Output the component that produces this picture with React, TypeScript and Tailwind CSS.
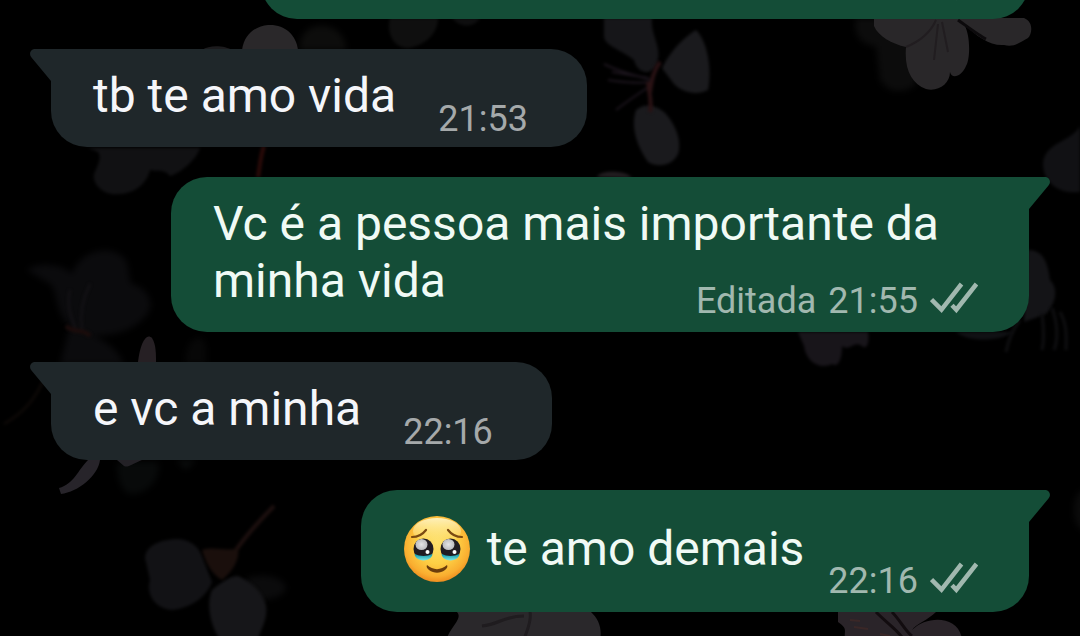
type Message = {
  id: number;
  text: string;
  time: string;
  outgoing?: boolean;
  edited?: boolean;
  emoji?: boolean;
};

const messages: Message[] = [
  { id: 2, text: "tb te amo vida", time: "21:53" },
  {
    id: 3,
    text: "Vc é a pessoa mais importante da minha vida",
    time: "21:55",
    outgoing: true,
    edited: true,
  },
  { id: 4, text: "e vc a minha", time: "22:16" },
  { id: 5, text: "te amo demais", time: "22:16", outgoing: true, emoji: true },
];

function Checks() {
  return (
    <svg
      className="mb-1 h-9 w-12 shrink-0"
      viewBox="0 0 48 36"
      fill="none"
      stroke="currentColor"
      strokeWidth="4.5"
      role="img"
      aria-label="Entregue"
    >
      <path d="M1.5 18.500 11.500 28.700 31.500 3" />
      <path d="M22 24.200 26.300 28.700 46.500 3" />
    </svg>
  );
}

function HoldingTears() {
  return (
    <svg
      className="mr-4 size-[68px] shrink-0"
      viewBox="0 0 68 68"
      role="img"
      aria-label="🥹"
    >
      <defs>
        <radialGradient id="face" cx="50%" cy="42%" r="60%">
          <stop offset="0" stopColor="#fee06a" />
          <stop offset="0.5" stopColor="#fdd045" />
          <stop offset="0.82" stopColor="#f9ae30" />
          <stop offset="1" stopColor="#ec861c" />
        </radialGradient>
        <linearGradient id="highlight" x1="0" y1="0" x2="0" y2="1">
          <stop offset="0" stopColor="#fff6c8" stopOpacity="0.9" />
          <stop offset="1" stopColor="#fff0a0" stopOpacity="0" />
        </linearGradient>
        <linearGradient id="tear" x1="0" y1="0" x2="0" y2="1">
          <stop offset="0.2" stopColor="#1fa3b3" />
          <stop offset="1" stopColor="#7fe6e2" />
        </linearGradient>
        <radialGradient id="shine">
          <stop offset="0" stopColor="#e4e4e6" />
          <stop offset="1" stopColor="#bcbcc0" />
        </radialGradient>
      </defs>
      <circle cx="34" cy="34" r="33" fill="url(#face)" />
      <ellipse cx="34" cy="16" rx="24" ry="13" fill="url(#highlight)" />
      <g fill="none" stroke="#7a4a12" strokeWidth="2.200" strokeLinecap="round">
        <path d="M9 22C14.500 22 20 19 23 15" />
        <path d="M59 22C53.500 22 48 19 45 15" />
      </g>
      {[20.5, 47.5].map((cx) => (
        <g key={cx}>
          <ellipse cx={cx} cy="34" rx="10" ry="10.500" fill="#211c22" />
          <path
            d={`M${cx - 9} 39Q${cx} 43 ${cx + 9} 39C${cx + 8} 47.500 ${cx - 8} 47.500 ${cx - 9} 39Z`}
            fill="url(#tear)"
          />
          <ellipse cx={cx - 2} cy="29.500" rx="6" ry="5.500" fill="url(#shine)" />
          <circle cx={cx + 4} cy="37" r="2" fill="#fff" />
        </g>
      ))}
      <path
        d="M24 50C30 55.500 38 55.500 44 50C45 51.500 44 53.500 42 55C37 58.500 31 58.500 26 55C24 53.500 23 51.500 24 50Z"
        fill="#6b3d0c"
      />
    </svg>
  );
}

function Tail({ outgoing }: { outgoing?: boolean }) {
  return (
    <svg
      className={
        outgoing
          ? "absolute top-0 left-full -ml-px h-8 w-[22px] text-[#144d37]"
          : "absolute top-0 right-full -mr-px h-8 w-[22px] -scale-x-100 text-[#1f272a]"
      }
      viewBox="0 0 22 32"
      fill="currentColor"
      aria-hidden="true"
    >
      <path d="M0 0H17C21.500 0 23.500 5 20.500 8.500L1 32H0Z" />
    </svg>
  );
}

function Meta({ time, outgoing, edited }: Partial<Message>) {
  return (
    <div
      className={
        outgoing
          ? "flex shrink-0 items-end gap-3 text-4xl leading-10 text-[#a1b8af]"
          : "flex shrink-0 items-end gap-3 text-4xl leading-10 text-[#a5a9aa]"
      }
    >
      {edited && <span>Editada</span>}
      <time>{time}</time>
      {outgoing && <Checks />}
    </div>
  );
}

function Bubble({ message }: { message: Message }) {
  const { text, time, outgoing, edited, emoji } = message;

  if (outgoing) {
    return (
      <li className="relative max-w-[858px] self-end rounded-[36px] rounded-tr-none bg-[#144d37] pt-[18px] pr-[51px] pb-[11px] pl-[42px] text-[#f0faf5]">
        <Tail outgoing />
        <div className={edited ? "" : "flex items-end gap-6"}>
          <p className={emoji ? "flex items-center pt-1 pb-4 leading-[73px]" : "leading-[57px]"}>
            {emoji && <HoldingTears />}
            {text}
          </p>
          <div className={edited ? "-mt-7 flex justify-end" : ""}>
            <Meta time={time} outgoing edited={edited} />
          </div>
        </div>
      </li>
    );
  }

  return (
    <li className="relative flex max-w-[858px] items-end gap-[42px] self-start rounded-[36px] rounded-tl-none bg-[#1f272a] pt-[18px] pr-[59px] pb-2 pl-[42px] text-[#f5f6fa]">
      <Tail />
      <p className="pb-[15px] leading-[57px]">{text}</p>
      <Meta time={time} />
    </li>
  );
}

// Dim cherry blossoms behind the conversation
function Wallpaper() {
  return (
    <svg
      className="absolute inset-0 size-full"
      viewBox="0 0 1080 636"
      preserveAspectRatio="xMidYMid slice"
      colorInterpolationFilters="sRGB"
      aria-hidden="true"
    >
      <defs>
        <filter id="soft" x="-20%" y="-20%" width="140%" height="140%">
          <feGaussianBlur stdDeviation="1.500" />
        </filter>
        <filter id="far" x="-20%" y="-20%" width="140%" height="140%">
          <feGaussianBlur stdDeviation="3" />
        </filter>
      </defs>

      <g filter="url(#far)">
        <path d="M300 50C298 32 312 24 325 26C340 28 346 40 346 50Z" fill="#0d0d0c" />
        <path d="M856 18C852 34 862 46 876 46L880 80C890 96 908 92 916 84L910 18Z" fill="#0c0c0c" />
        <path d="M27 270C40 260 66 266 72 274C80 250 110 244 124 258C130 264 128 280 132 284C148 288 156 304 146 316C132 332 108 338 90 334C110 342 120 354 124 364H60L70 326C54 312 58 290 50 284Z" fill="#0b0b0d" />
        <path d="M186 364C184 348 192 336 202 338C208 344 206 356 206 364Z" fill="#070707" />
        <path d="M118 462H158C162 480 146 494 132 494C122 494 116 478 118 462Z" fill="#080a0a" />
        <path d="M176 460H196L186 470Z" fill="#0a0c0c" />
        <path d="M244 580C260 572 284 576 286 588C284 598 264 602 254 598Z" fill="#0b0b0c" />
        <ellipse cx="1084" cy="510" rx="10" ry="20" fill="#0b0b0b" />
      </g>

      <g filter="url(#soft)">
        <path d="M88 148H200C196 160 182 172 170 176C164 168 156 172 150 170C146 186 132 194 118 194C106 196 92 186 94 174C98 164 102 158 98 152Z" fill="#111113" />
        <path d="M390 18H438C438 34 424 46 408 48C394 48 386 34 390 18Z" fill="#0f0f0f" />
        <path d="M452 18H480C474 28 460 28 452 18Z" fill="#0e0e0f" />
        <path d="M604 18H652C650 36 664 48 656 66C648 78 636 70 634 60C622 50 604 46 604 36Z" fill="#161619" />
        <path d="M662 68C672 48 686 36 696 30C708 42 712 70 708 90C696 96 682 92 674 84Z" fill="#1a1a1d" />
        <path d="M636 110C646 102 656 106 664 112C676 124 682 142 678 154C672 166 658 168 648 162C638 148 630 128 636 110Z" fill="#1a1a1d" />
        <path d="M597 177C600 170 626 170 632 178Z" fill="#221d20" />
        <path d="M1080 126C1072 142 1044 142 1043 164C1044 186 1062 194 1080 192Z" fill="#111114" />
        <path d="M1028 250C1044 250 1048 264 1050 280C1060 290 1054 306 1046 314L1024 322Z" fill="#141417" />
        <path d="M956 332H1014C998 342 968 342 956 332Z" fill="#101114" />
        <path d="M798 332H868C870 344 866 350 862 346C854 340 850 352 842 346C842 360 838 368 832 364C820 370 806 362 804 346Z" fill="#18151a" />
        <path d="M146 562C142 552 152 542 168 540C184 536 198 544 202 556L212 582C206 598 190 608 172 610C154 608 146 594 150 580Z" fill="#121215" />
        <path d="M212 590C222 582 230 576 238 576C252 582 264 594 266 606C268 620 260 630 258 640H220C210 624 206 604 212 590Z" fill="#161619" />
      </g>

      <g>
        <path d="M242 50C244 34 256 26 268 25C284 24 296 34 298 50Z" fill="#2a282a" />
        <path d="M202 50C210 44 226 46 232 50Z" fill="#1c1b1d" />
        <path d="M874 18H1024C1034 22 1032 34 1028 38C1020 42 1014 48 1004 45C990 46 976 36 964 24C971 36 970 60 966 66C962 76 952 80 950 72C950 84 938 92 926 89C912 84 904 70 906 47C892 44 878 36 874 26Z" fill="#292729" />
        <path d="M906 47C918 42 930 34 936 20M934 60 938 24M948 52 942 22" fill="none" stroke="#211d20" strokeWidth="2" />
        <path d="M958 20C972 30 980 36 986 39" fill="none" stroke="#0c0a0c" strokeWidth="3" />
        <path d="M138 362C140 344 146 332 152 338C156 344 156 354 156 362Z" fill="#262024" />
        <path d="M88 460H100C98 476 78 492 61 494L59 488C74 484 78 470 88 460Z" fill="#27242a" />
        <path d="M117 460H142C132 464 128 468 124 466Z" fill="#232126" />
        <path d="M446 640C452 624 464 618 456 611H590C600 620 602 630 600 640Z" fill="#2a282b" />
        <path d="M482 626C500 624 504 616 524 616M530 612C532 622 526 632 524 640" fill="none" stroke="#1f1c1f" strokeWidth="3" />
        <path d="M838 612H936C928 620 916 624 912 630C928 614 960 616 962 640H846C842 632 850 630 838 622Z" fill="#2a2429" />
        <path d="M876 612C890 626 898 630 904 640M892 612C900 620 906 632 912 636" fill="none" stroke="#120c0f" strokeWidth="3" />
        <path d="M850 620 860 621M854 627 868 629M880 634 890 636" fill="none" stroke="#3a2727" strokeWidth="2" />
      </g>

      <g fill="none" filter="url(#soft)">
        <path d="M604 64C620 72 636 76 652 80M608 80C624 82 636 84 650 82M616 110C626 102 638 94 650 86M612 72 648 78" stroke="#1b141c" strokeWidth="2" />
        <path d="M650 92C652 78 654 70 660 62M648 82C650 98 652 104 650 112" stroke="#2a1214" strokeWidth="4" />
        <path d="M264 146C260 158 260 166 258 177" stroke="#2a0a08" strokeWidth="4" />
        <path d="M274 506C258 522 246 536 236 550" stroke="#1c0f0e" strokeWidth="4" />
        <path d="M202 550C214 546 228 552 238 548C240 560 232 572 222 580C212 574 206 564 202 550Z" fill="#1a0f0c" />
        <path d="M46 376C36 396 28 410 4 424" stroke="#0c0806" strokeWidth="3" />
        <path d="M70 290C66 306 72 320 76 330M90 284C82 300 80 316 82 330" stroke="#151317" strokeWidth="2" />
        <path d="M66 326C74 334 84 328 90 336" stroke="#1c0c0b" strokeWidth="4" />
        <path d="M1020 320C1012 330 1008 342 1006 352M1042 314C1044 330 1044 342 1042 350M1052 308C1058 324 1058 340 1054 350M1060 312C1068 326 1066 340 1066 350" stroke="#0f0f11" strokeWidth="3" />
      </g>
    </svg>
  );
}

export default function App() {
  return (
    <main className="relative flex h-screen flex-col justify-end overflow-hidden bg-black font-['Roboto',sans-serif] text-5xl">
      <Wallpaper />
      <ul className="relative flex flex-col gap-[30px] px-[51px] pb-6">
        <li className="flex w-[78.5%] justify-end self-end rounded-[36px] bg-[#144d37] pt-[51px] pr-[51px] pb-[11px]">
          <Meta time="21:43" outgoing />
        </li>
        {messages.map((message) => (
          <Bubble key={message.id} message={message} />
        ))}
      </ul>
    </main>
  );
}
